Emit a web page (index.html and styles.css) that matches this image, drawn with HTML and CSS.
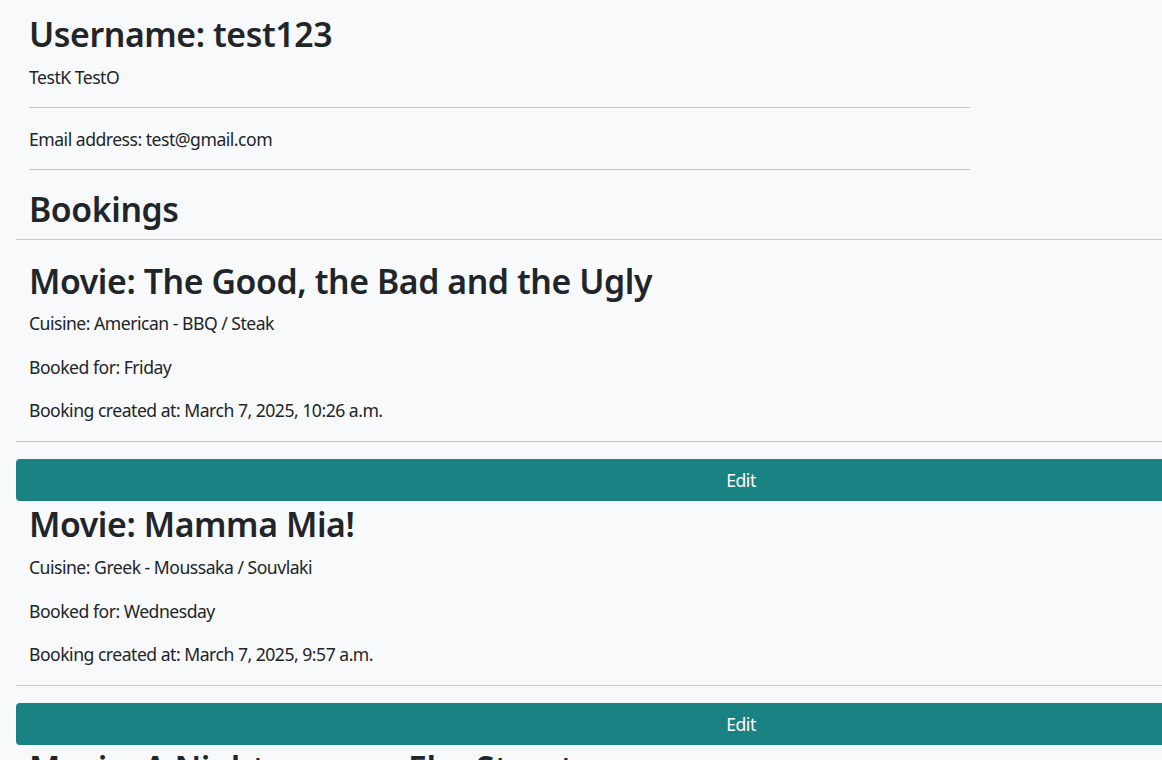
FILE: index.html
```html
<!DOCTYPE html>
<html lang="en">
<head>
<meta charset="utf-8">
<title>Profile</title>
<link rel="stylesheet" href="styles.css">
</head>
<body>
<main class="page">
  <section class="profile">
    <h2 class="heading">Username: test123</h2>
    <p class="text">TestK TestO</p>
    <hr class="rule">
    <p class="text">Email address: test@gmail.com</p>
    <hr class="rule">
  </section>
  <section class="bookings">
    <h2 class="heading bookings-title">Bookings</h2>
    <hr class="rule rule-tight">
    <article class="booking">
      <h2 class="heading">Movie: The Good, the Bad and the Ugly</h2>
      <p class="text">Cuisine: American - BBQ / Steak</p>
      <p class="text">Booked for: Friday</p>
      <p class="text">Booking created at: March 7, 2025, 10:26 a.m.</p>
    </article>
    <hr class="rule">
    <button class="btn-edit" type="button">Edit</button>
    <article class="booking">
      <h2 class="heading">Movie: Mamma Mia!</h2>
      <p class="text">Cuisine: Greek - Moussaka / Souvlaki</p>
      <p class="text">Booked for: Wednesday</p>
      <p class="text">Booking created at: March 7, 2025, 9:57 a.m.</p>
    </article>
    <hr class="rule">
    <button class="btn-edit" type="button">Edit</button>
    <article class="booking">
      <h2 class="heading">Movie: A Nightmare on Elm Street</h2>
      <p class="text">Cuisine: American - Burgers</p>
    </article>
  </section>
</main>
</body>
</html>
```

FILE: styles.css
```css
html {
  overflow: hidden;
}

body {
  margin: 0;
  background: #f8f9fa;
  color: #212529;
  font-family: "Noto Sans", "Open Sans", sans-serif;
  font-size: 17.6px;
  line-height: 26px;
  letter-spacing: -0.5px;
}

.page {
  padding-top: 14px;
}

.heading {
  margin: 0 0 8.8px;
  font-size: 33.8px;
  font-weight: 600;
  line-height: 41px;
  letter-spacing: -0.4px;
}

.text {
  margin: 0 0 17.5px;
}

.rule {
  margin: 17.5px 0;
  border: 0;
  border-top: 1px solid #c6c8ca;
}

.rule-tight {
  margin-top: 0;
}

.profile {
  margin-left: 29px;
  width: 941px;
}

.bookings {
  margin-left: 16px;
  width: 1450px;
}

.bookings-title {
  margin-top: 19px;
  margin-bottom: 8.8px;
  padding-left: 13px;
}

.booking {
  padding: 3px 0 0 13px;
}

.btn-edit {
  display: block;
  width: 100%;
  height: 42px;
  border: 0;
  border-radius: 4px;
  background: #1a8282;
  color: #fff;
  font: inherit;
  letter-spacing: inherit;
  line-height: 26px;
  cursor: pointer;
}
```
